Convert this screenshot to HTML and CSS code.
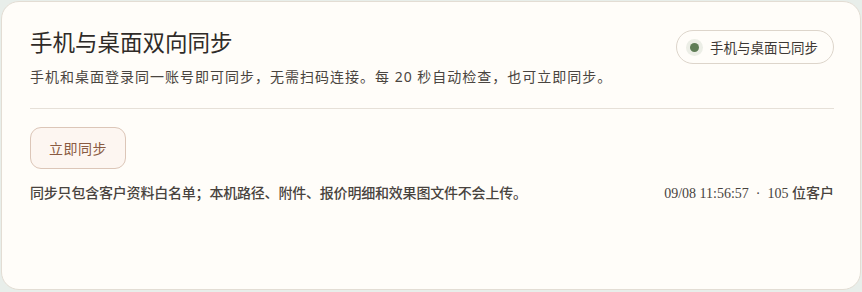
FILE: index.html
```html
<!DOCTYPE html>
<html lang="zh-CN">
<head>
  <meta charset="UTF-8">
  <meta name="viewport" content="width=device-width, initial-scale=1.0">
  <title>手机与桌面双向同步</title>
  <link rel="stylesheet" href="styles.css">
</head>
<body>

  <div class="sync-card">
    <div class="sync-head">
      <div class="sync-intro">
        <h1 class="sync-title">手机与桌面双向同步</h1>
        <p class="sync-desc">手机和桌面登录同一账号即可同步，无需扫码连接。每 20 秒自动检查，也可立即同步。</p>
      </div>
      <div class="sync-badge">
        <span class="sync-dot"></span>
        <span>手机与桌面已同步</span>
      </div>
    </div>

    <button type="button" class="sync-button">立即同步</button>

    <div class="sync-foot">
      <span class="sync-note">同步只包含客户资料白名单；本机路径、附件、报价明细和效果图文件不会上传。</span>
      <span class="sync-meta">09/08 11:56:57 &nbsp;·&nbsp; 105 位客户</span>
    </div>
  </div>

</body>
</html>
```

FILE: styles.css
```css
    body {
      margin: 0;
      padding: 1px 1px 2px 1px;
      height: 100vh;
      box-sizing: border-box;
      background-color: #e8eeea;
      font-family: "Noto Sans", "Noto Sans CJK SC", sans-serif;
    }

    .sync-card {
      height: 100%;
      box-sizing: border-box;
      padding: 26px 26px 0 28px;
      background-color: #fffdf9;
      border: 1px solid #e3ddd4;
      border-radius: 18px;
    }

    .sync-head {
      display: flex;
      justify-content: space-between;
      align-items: flex-start;
      padding-bottom: 20px;
      border-bottom: 1px solid #e6e0d8;
    }

    .sync-title {
      margin: 0;
      font-size: 22.5px;
      line-height: 30px;
      font-weight: 400;
      color: #2f2b28;
    }

    .sync-desc {
      margin: 8px 0 0;
      font-size: 14px;
      line-height: 22px;
      letter-spacing: 1px;
      color: #4a4540;
    }

    .sync-badge {
      display: flex;
      align-items: center;
      gap: 11px;
      margin-top: 2px;
      height: 34px;
      box-sizing: border-box;
      padding: 0 15px 0 13px;
      border: 1px solid #ddd5cb;
      border-radius: 17px;
      font-size: 13.5px;
      color: #3d3834;
    }

    .sync-dot {
      width: 9px;
      height: 9px;
      border-radius: 50%;
      background-color: #5f7d56;
      box-shadow: 0 0 0 4px #eceee6;
    }

    .sync-button {
      display: block;
      margin-top: 18px;
      width: 96px;
      height: 42px;
      font-family: inherit;
      font-size: 14px;
      letter-spacing: 0.5px;
      color: #8a5b42;
      background-color: #fdf6f1;
      border: 1px solid #dcc6b8;
      border-radius: 11px;
      cursor: pointer;
    }

    .sync-foot {
      display: flex;
      justify-content: space-between;
      margin-top: 15px;
      font-family: "Liberation Serif", "Noto Sans CJK SC", serif;
      font-size: 14px;
      line-height: 20px;
      font-weight: 500;
      color: #48433e;
    }

    .sync-note {
      letter-spacing: -0.2px;
    }
```
